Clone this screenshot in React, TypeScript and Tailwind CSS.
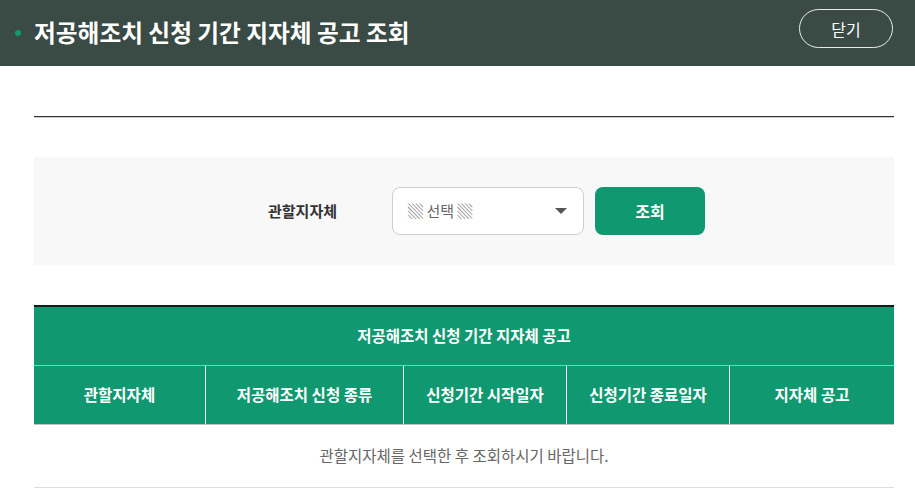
const GREEN = 'bg-[#109870]';

const columns = ['관할지자체', '저공해조치 신청 종류', '신청기간 시작일자', '신청기간 종료일자', '지자체 공고'];

export default function App() {
  return (
    <div className="min-h-[488px] bg-white font-['Noto_Sans_CJK_KR','Noto_Sans',sans-serif] text-[#333]">
      {/* Title bar */}
      <header className="flex h-[66px] items-center justify-between bg-[#3a4a44] pl-[15px] pr-[22px]">
        <div className="flex items-center">
          <span className={`mr-[13px] h-[6px] w-[6px] rounded-full ${GREEN}`} />
          <h1 className="text-[23.7px] font-bold leading-none text-white">
            저공해조치 신청 기간 지자체 공고 조회
          </h1>
        </div>
        <button className="mt-[-9px] h-[39px] w-[94px] rounded-full border border-[#e8ece9] text-[16px] text-white">
          닫기
        </button>
      </header>

      <div className="pl-[34px] pr-[21px]">
        <div className="mt-[50px] h-[2px] border-t border-[#333] bg-[#ccc]" />

        {/* Search box */}
        <div className="mt-[39px] flex h-[108px] items-center bg-[#f8f8f8] pl-[234px]">
          <span className="text-[15px] font-semibold text-[#333]">관할지자체</span>
          <div className="ml-[55px] flex h-[48px] w-[192px] items-center justify-between rounded-lg border border-[#cfcfcf] bg-white pl-[15px] pr-[16px]">
            <span className="text-[15px] text-[#666]">▒ 선택 ▒</span>
            <span className="h-0 w-0 border-x-[6px] border-t-[6px] border-x-transparent border-t-[#555]" />
          </div>
          <button className={`ml-[11px] h-[48px] w-[110px] rounded-lg ${GREEN} text-[16px] font-bold text-white`}>
            조회
          </button>
        </div>

        {/* Result table */}
        <div className="mt-[40px] border-t-2 border-[#1a1a1a]">
          <div className={`flex h-[58px] items-center justify-center ${GREEN} text-[15.5px] font-bold text-white`}>
            저공해조치 신청 기간 지자체 공고
          </div>
          <div className="h-px bg-[#8fc7b4]" />
          <div className={`grid h-[59px] grid-cols-[171px_198px_163px_163px_1fr] ${GREEN} border-b border-[#c4c4c4]`}>
            {columns.map((c, i) => (
              <div
                key={c}
                className={`flex items-center justify-center text-[15.5px] font-bold text-white ${i > 0 ? 'border-l border-white' : ''}`}
              >
                {c}
              </div>
            ))}
          </div>
          <div className="flex h-[63px] items-center justify-center border-b border-[#dcdcdc] text-[15.5px] text-[#666]">
            관할지자체를 선택한 후 조회하시기 바랍니다.
          </div>
        </div>
      </div>
    </div>
  );
}
